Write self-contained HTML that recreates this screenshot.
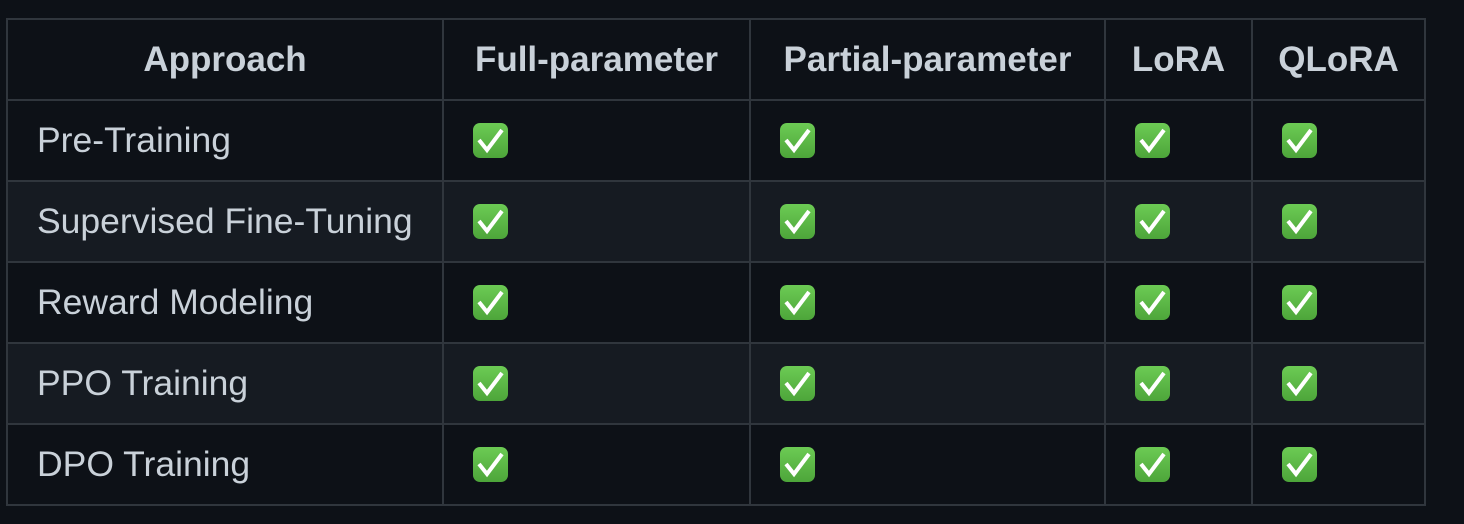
<!DOCTYPE html>
<html><head><style>
body{margin:0;background:#0d1117;width:1464px;height:524px;overflow:hidden;font-family:"Liberation Sans",sans-serif;}
table{position:absolute;left:6px;top:18px;width:1418px;border-collapse:collapse;color:#c9d1d9;font-size:35.5px;table-layout:fixed;}
td,th{border:2px solid #30363d;height:77px;padding:0 29px;box-sizing:border-box;white-space:nowrap;overflow:visible;}
th{text-align:center;font-weight:bold;font-size:35px;padding:0;}
tr:nth-child(odd) td{background:#161b22;}
tr{height:81px;}
.c{display:inline-block;width:35px;height:35px;border-radius:7px;background:linear-gradient(#6ccb54,#4da53a);vertical-align:middle;position:relative;top:-2px;}
.c svg{position:absolute;left:0;top:0}
</style></head><body>
<table>
<colgroup><col style="width:436px"><col style="width:307px"><col style="width:355px"><col style="width:147px"><col style="width:173px"></colgroup>
<tr><th>Approach</th><th>Full-parameter</th><th>Partial-parameter</th><th>LoRA</th><th>QLoRA</th></tr>
<tr><td>Pre-Training</td><td><i class="c"></i></td><td><i class="c"></i></td><td><i class="c"></i></td><td><i class="c"></i></td></tr>
<tr><td>Supervised Fine-Tuning</td><td><i class="c"></i></td><td><i class="c"></i></td><td><i class="c"></i></td><td><i class="c"></i></td></tr>
<tr><td>Reward Modeling</td><td><i class="c"></i></td><td><i class="c"></i></td><td><i class="c"></i></td><td><i class="c"></i></td></tr>
<tr><td>PPO Training</td><td><i class="c"></i></td><td><i class="c"></i></td><td><i class="c"></i></td><td><i class="c"></i></td></tr>
<tr><td>DPO Training</td><td><i class="c"></i></td><td><i class="c"></i></td><td><i class="c"></i></td><td><i class="c"></i></td></tr>
</table>
<script>
document.querySelectorAll('.c').forEach(e=>e.innerHTML='<svg width="35" height="35" viewBox="0 0 35 35"><path d="M6 17 L14 27 L29 7" fill="none" stroke="#fff" stroke-width="4" stroke-linejoin="miter"/></svg>');
</script>
</body></html>
